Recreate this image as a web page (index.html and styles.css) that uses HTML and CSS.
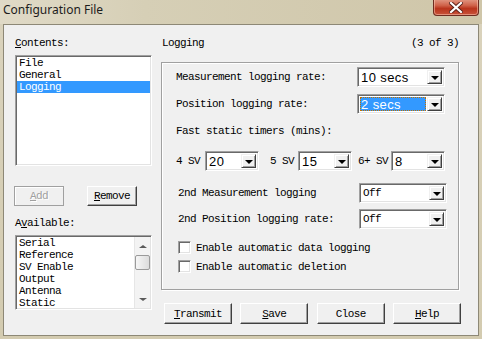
FILE: index.html
```html
<!DOCTYPE html>
<html lang="en">
<head>
    <meta charset="UTF-8">
    <title>Configuration File</title>
    <link rel="stylesheet" href="styles.css">
</head>
<body>
    <div class="window">
        <!-- Title bar -->
        <div class="titlebar">
            <span class="title">Configuration File</span>
            <div class="close-btn">
                <svg width="14" height="11" viewBox="0 0 14 11">
                    <path d="M2 1 L12 10 M12 1 L2 10" stroke="#5a2018" stroke-width="4" stroke-linecap="square"/>
                    <path d="M2 1 L12 10 M12 1 L2 10" stroke="#fff" stroke-width="2.2" stroke-linecap="square"/>
                </svg>
            </div>
        </div>

        <div class="client">
            <!-- Left column -->
            <div class="left-col">
                <div class="label"><u>C</u>ontents:</div>
                <div class="listbox contents">
                    <div class="item">File</div>
                    <div class="item">General</div>
                    <div class="item selected">Logging</div>
                </div>
                <div class="btn-row">
                    <div class="btn small disabled"><u>A</u>dd</div>
                    <div class="btn small"><u>R</u>emove</div>
                </div>
                <div class="label spaced">A<u>v</u>ailable:</div>
                <div class="listbox available">
                    <div class="items">
                        <div class="item">Serial</div>
                        <div class="item">Reference</div>
                        <div class="item">SV Enable</div>
                        <div class="item">Output</div>
                        <div class="item">Antenna</div>
                        <div class="item">Static</div>
                    </div>
                    <div class="scrollbar">
                        <div class="arrow up"></div>
                        <div class="thumb"></div>
                        <div class="arrow down"></div>
                    </div>
                </div>
            </div>

            <!-- Right column -->
            <div class="right-col">
                <div class="page-head">
                    <span>Logging</span>
                    <span>(3 of 3)</span>
                </div>

                <div class="groupbox">
                    <div class="row first">
                        <span>Measurement logging rate:</span>
                        <div class="combo w88"><span class="val">10 secs</span><span class="drop"></span></div>
                    </div>
                    <div class="row second">
                        <span>Position logging rate:</span>
                        <div class="combo w88 focused"><span class="val"><span class="sel">2 secs</span></span><span class="drop"></span></div>
                    </div>
                    <div class="row fast">
                        <span>Fast static timers (mins):</span>
                    </div>
                    <div class="row sv">
                        <span>4 SV</span>
                        <div class="combo w54 c1"><span class="val">20</span><span class="drop"></span></div>
                        <span class="sv5">5 SV</span>
                        <div class="combo w54 c2"><span class="val">15</span><span class="drop"></span></div>
                        <span class="sv6">6+ SV</span>
                        <div class="combo w54 c3"><span class="val">8</span><span class="drop"></span></div>
                    </div>
                    <div class="row shifted meas2">
                        <span>2nd Measurement logging</span>
                        <div class="combo w88"><span class="val mono">Off</span><span class="drop"></span></div>
                    </div>
                    <div class="row shifted pos2">
                        <span>2nd Position logging rate:</span>
                        <div class="combo w88"><span class="val mono">Off</span><span class="drop"></span></div>
                    </div>
                    <div class="check-row first-check">
                        <span class="checkbox"></span>
                        <span>Enable automatic data logging</span>
                    </div>
                    <div class="check-row second-check">
                        <span class="checkbox"></span>
                        <span>Enable automatic deletion</span>
                    </div>
                </div>

                <div class="actions">
                    <div class="btn wide"><u>T</u>ransmit</div>
                    <div class="btn wide"><u>S</u>ave</div>
                    <div class="btn wide">Close</div>
                    <div class="btn wide"><u>H</u>elp</div>
                </div>
            </div>
        </div>
    </div>
</body>
</html>
```

FILE: styles.css
```css
* {
    margin: 0;
    padding: 0;
    box-sizing: border-box;
}

body {
    width: 482px;
    height: 339px;
    overflow: hidden;
    font-family: "Liberation Mono", monospace;
    font-size: 11px;
    letter-spacing: -0.6px;
    color: #000;
}

u {
    text-decoration: underline;
    text-underline-offset: 1px;
}

/* Window frame */
.window {
    width: 482px;
    height: 339px;
    display: flex;
    flex-direction: column;
    background: linear-gradient(#dad3bd, #d3cbb0);
}

.titlebar {
    height: 24px;
    display: flex;
    justify-content: space-between;
    align-items: flex-start;
    background: linear-gradient(90deg, #e0dac7 0%, #d6cfb6 30%, #cfc6a9 100%);
}

.title {
    font-family: "Noto Sans", sans-serif;
    font-size: 12px;
    letter-spacing: 0;
    line-height: 16px;
    margin: 2px 0 0 3px;
    color: #1c1c1c;
}

.close-btn {
    width: 46px;
    height: 17px;
    margin: -1px 3px 0 0;
    border: 1px solid #6e2c20;
    border-top: none;
    border-radius: 0 0 4px 4px;
    background: linear-gradient(#e29a86 0%, #d0634a 40%, #b9341c 60%, #c8533a 100%);
    box-shadow: inset 0 0 0 1px rgba(255, 210, 190, 0.5);
    display: flex;
    align-items: center;
    justify-content: center;
}

.client {
    flex: 1;
    margin: 0 3px 3px 3px;
    border: 1px solid #8d8876;
    background: #f0f0f0;
    display: flex;
}

/* Left column */
.left-col {
    width: 137px;
    margin-left: 11px;
    padding-top: 12px;
    display: flex;
    flex-direction: column;
}

.label {
    line-height: 12px;
    height: 12px;
}

.label.spaced {
    margin-top: 11px;
}

.listbox {
    margin-top: 6px;
    background: #fff;
    border: 1px solid;
    border-color: #a0a0a0 #fff #fff #a0a0a0;
    box-shadow: inset 1px 1px 0 #696969, inset -1px -1px 0 #e3e3e3;
    padding: 1px;
}

.listbox.contents {
    height: 111px;
}

.listbox.available {
    height: 75px;
    display: flex;
}

.listbox .items {
    flex: 1;
}

.item {
    line-height: 12px;
    height: 12px;
    padding-left: 2px;
    white-space: nowrap;
}

.item.selected {
    background: #3399ff;
    color: #fff;
}

.scrollbar {
    width: 16px;
    background: #f3f3f3;
    border-left: 1px solid #e6e6e6;
    display: flex;
    flex-direction: column;
    align-items: center;
}

.arrow {
    width: 0;
    height: 0;
    border-left: 4px solid transparent;
    border-right: 4px solid transparent;
}

.arrow.up {
    margin-top: 8px;
    border-bottom: 3px solid #5a5a5a;
}

.arrow.down {
    margin-top: auto;
    margin-bottom: 7px;
    border-top: 3px solid #5a5a5a;
}

.thumb {
    width: 15px;
    height: 15px;
    margin-top: 7px;
    border: 1px solid #9a9a9a;
    border-radius: 2px;
    background: linear-gradient(90deg, #f6f6f6, #dcdcdc);
}

/* Buttons */
.btn-row {
    display: flex;
    gap: 23px;
    margin: 20px 0 0 -1px;
}

.btn {
    height: 21px;
    display: flex;
    align-items: center;
    justify-content: center;
    background: #f0f0f0;
    border: 1px solid;
    border-color: #fff #404040 #404040 #fff;
    box-shadow: inset -1px -1px 0 #a0a0a0;
    line-height: 12px;
}

.btn.small {
    width: 50px;
    height: 20px;
}

.btn.disabled {
    color: #a0a0a0;
    text-shadow: 1px 1px 0 #fff;
    border-color: #a0a0a0;
    box-shadow: inset 1px 1px 0 #fff;
}

.btn.wide {
    width: 68px;
}

/* Right column */
.right-col {
    width: 300px;
    margin-left: 9px;
    padding-top: 12px;
    display: flex;
    flex-direction: column;
}

.page-head {
    display: flex;
    justify-content: space-between;
    line-height: 12px;
    height: 12px;
    padding: 0 2px 0 1px;
}

.groupbox {
    width: 298px;
    height: 228px;
    margin-top: 13px;
    border: 1px solid #a0a0a0;
    box-shadow: inset 1px 1px 0 #fff, 1px 1px 0 #fff;
    display: flex;
    flex-direction: column;
}

.row {
    display: flex;
    align-items: center;
    justify-content: space-between;
    padding: 0 13px 0 14px;
    height: 20px;
    white-space: nowrap;
}

.row.shifted {
    padding: 0 11px 0 16px;
}

.row.first { margin-top: 4px; }
.row.second { margin-top: 7px; }
.row.fast { margin-top: 11px; height: 12px; }
.row.sv { margin-top: 14px; justify-content: flex-start; }
.row.meas2 { margin-top: 12px; }
.row.pos2 { margin-top: 6px; }

.sv5 { margin-left: 11px; }
.sv6 { margin-left: 6px; }
.combo.c1 { margin-left: 5px; }
.combo.c2 { margin-left: 4px; }
.combo.c3 { margin-left: 3px; }

.combo {
    height: 20px;
    display: flex;
    background: #fff;
    border: 1px solid;
    border-color: #a0a0a0 #fff #fff #a0a0a0;
    box-shadow: inset 1px 1px 0 #696969, inset -1px -1px 0 #e3e3e3;
    padding: 2px 2px 2px 2px;
}

.combo.w88 { width: 88px; }
.combo.w54 { width: 54px; }

.combo .val {
    flex: 1;
    display: flex;
    align-items: center;
    padding-left: 1px;
    font-family: "Liberation Sans", sans-serif;
    font-size: 13px;
    letter-spacing: 0.4px;
}

.combo .val.mono {
    font-family: "Liberation Mono", monospace;
    font-size: 11px;
    letter-spacing: -0.6px;
}

.combo.focused .val {
    padding: 0;
    margin-right: 1px;
}

.combo .sel {
    flex: 1;
    height: 100%;
    display: flex;
    align-items: center;
    background: #3399ff;
    color: #fff;
    outline: 1px dotted #c07000;
    outline-offset: -1px;
    padding-left: 1px;
}

.combo .drop {
    width: 15px;
    position: relative;
    background: #f0f0f0;
    border: 1px solid;
    border-color: #f0f0f0 #404040 #404040 #f0f0f0;
    box-shadow: inset 1px 1px 0 #fff, inset -1px -1px 0 #a0a0a0;
}

.combo .drop::after {
    content: "";
    position: absolute;
    left: 3px;
    top: 5px;
    border-left: 4px solid transparent;
    border-right: 4px solid transparent;
    border-top: 4px solid #000;
}

/* Checkboxes */
.check-row {
    display: flex;
    align-items: center;
    height: 13px;
    padding-left: 16px;
    white-space: nowrap;
}

.check-row.first-check { margin-top: 12px; }
.check-row.second-check { margin-top: 6px; }

.checkbox {
    width: 13px;
    height: 13px;
    margin-right: 5px;
    background: #fff;
    border: 1px solid;
    border-color: #a0a0a0 #fff #fff #a0a0a0;
    box-shadow: inset 1px 1px 0 #696969, inset -1px -1px 0 #e3e3e3;
}

/* Action buttons */
.actions {
    display: flex;
    justify-content: space-between;
    margin-top: 13px;
    padding-left: 3px;
}
```
